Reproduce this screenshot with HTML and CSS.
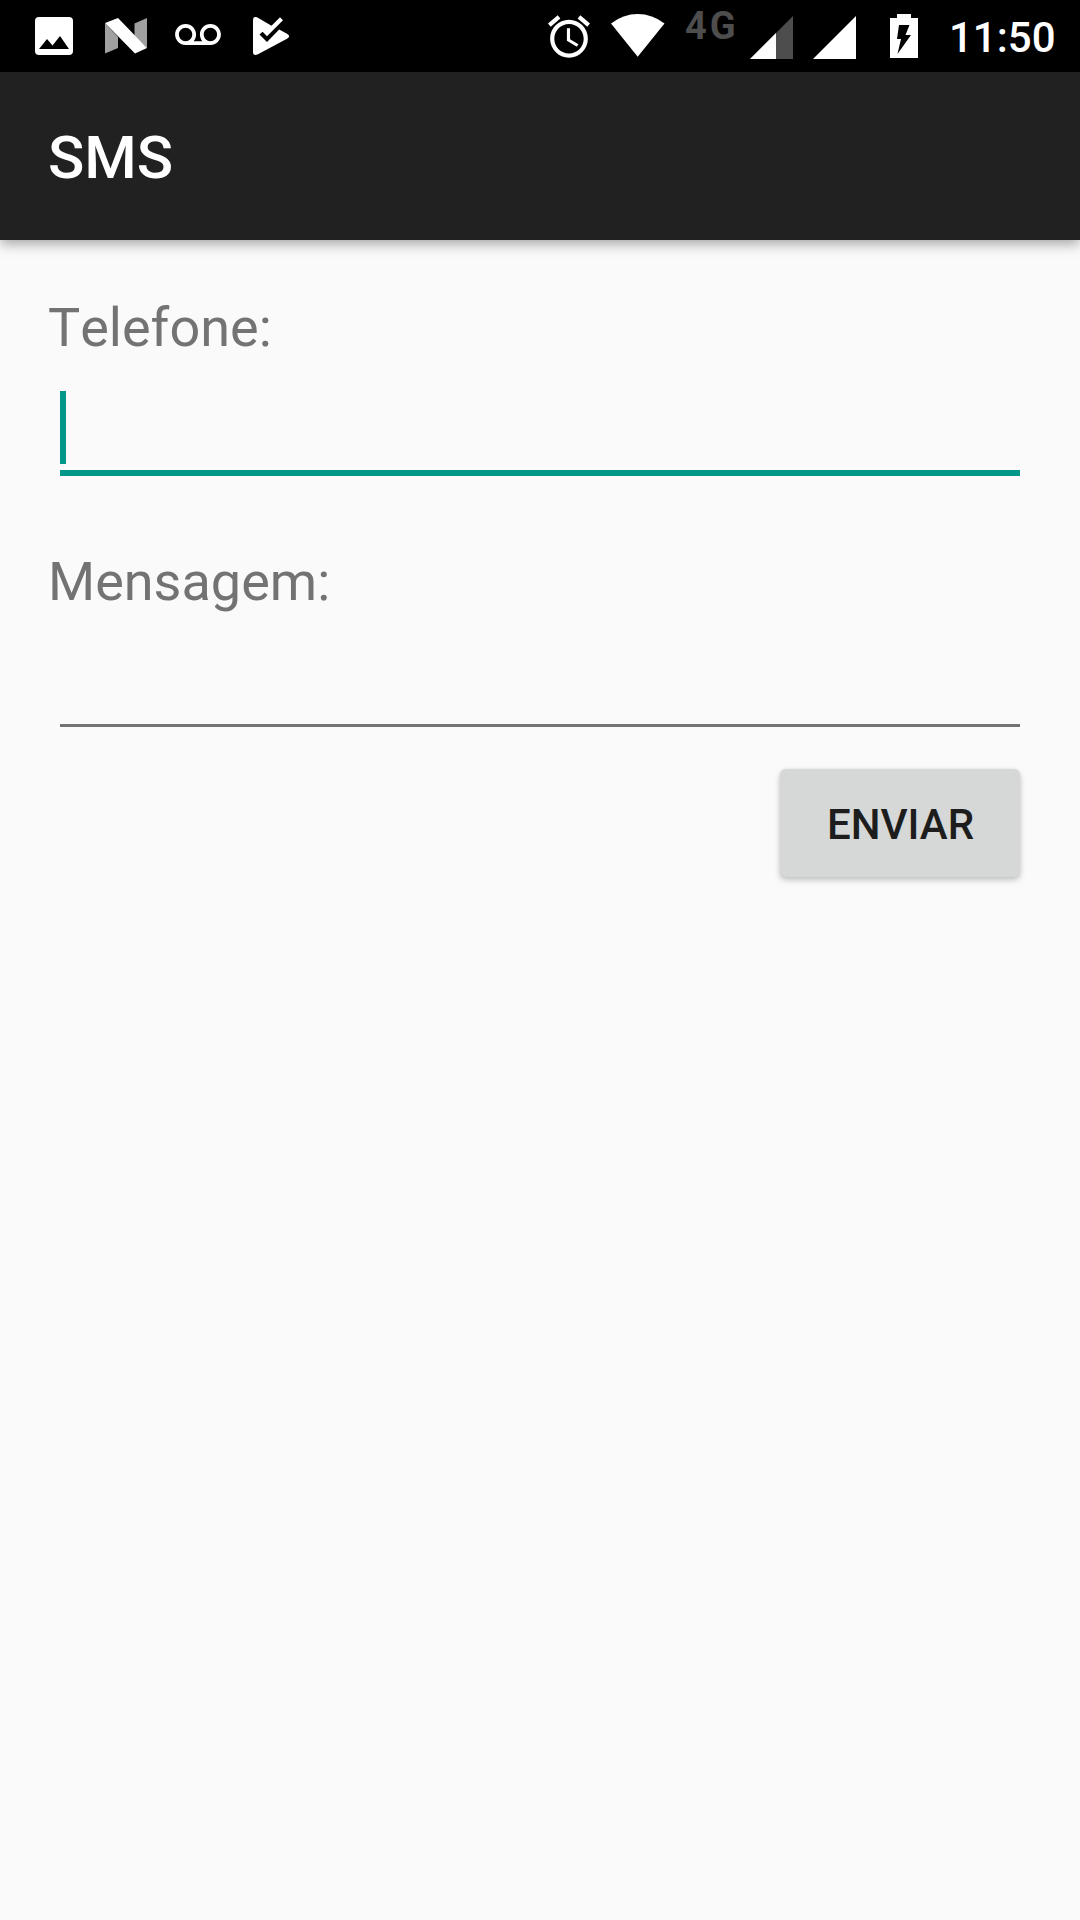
FILE: index.html
```html
<!DOCTYPE html>
<html lang="pt-BR">
<head>
<meta charset="utf-8">
<title>SMS</title>
<link rel="stylesheet" href="styles.css">
</head>
<body>
<div class="status-bar">
  <div class="notifications">
    <svg class="icon-image" width="38" height="38" viewBox="0 0 38 38"><rect width="38" height="38" rx="4" fill="#fff"/><path d="M4 32L12 22l5.500 6.500L25 19l9 13z" fill="#000"/></svg>
    <svg class="icon-n" width="42" height="36" viewBox="0 0 42 36"><path d="M0 5l13 14v11L0 35.500zM29.500 5.500L42 0v30L29.500 18z" fill="#a0a0a0"/><path d="M0 5L13 0l29 30-12 5.500z" fill="#fff"/></svg>
    <svg class="icon-voicemail" width="46" height="21" viewBox="0 6 24 11"><path fill="#fff" d="M18.500 6C15.460 6 13 8.460 13 11.500c0 1.330.470 2.550 1.260 3.500H9.740c.790-.950 1.260-2.170 1.260-3.500C11 8.460 8.540 6 5.500 6S0 8.460 0 11.500 2.460 17 5.500 17h13c3.040 0 5.500-2.460 5.500-5.500S21.540 6 18.500 6zm-13 9C3.570 15 2 13.430 2 11.500S3.570 8 5.500 8 9 9.570 9 11.500 7.430 15 5.500 15zm13 0c-1.930 0-3.500-1.570-3.500-3.500S16.570 8 18.500 8 22 9.570 22 11.500 20.430 15 18.500 15z"/></svg>
    <svg class="icon-play" width="37" height="38" viewBox="0 0 37 38"><path d="M0 3Q0-1 4 .3L18.500 8.700 27 .3l3 2.900L14 19.200l-4.400-4.400L6.500 17.600 14 25 26.200 12.500 34 16.700q4.300 2.500 0 5L4.500 37.600Q0 39 0 35z" fill="#fff"/></svg>
  </div>
  <div class="system">
    <svg class="icon-alarm" width="42" height="43" viewBox="2 1.860 20 20.140"><path fill="#fff" d="M22 5.720l-4.600-3.860-1.290 1.530 4.600 3.860L22 5.720zM7.880 3.390L6.600 1.860 2 5.710l1.290 1.530 4.590-3.850zM12.500 8H11v6l4.750 2.850.750-1.230-4-2.370V8zM12 4c-4.970 0-9 4.030-9 9s4.020 9 9 9c4.970 0 9-4.030 9-9s-4.030-9-9-9zm0 16c-3.870 0-7-3.130-7-7s3.130-7 7-7 7 3.130 7 7-3.130 7-7 7z"/></svg>
    <svg class="icon-wifi" width="54" height="43" viewBox="0 0 54 43"><path d="M0 9.500Q12 0 26.700 0T53.500 9.500L26.700 42.700z" fill="#fff"/></svg>
    <span class="network">4G</span>
    <svg class="icon-signal-low" width="43" height="43" viewBox="0 0 43 43"><path d="M43 0v43H0z" fill="#4d4d4d"/><path d="M26 17v26H0z" fill="#fff"/></svg>
    <svg class="icon-signal" width="43" height="43" viewBox="0 0 43 43"><path d="M43 0v43H0z" fill="#fff"/></svg>
    <svg class="icon-battery" width="28" height="44" viewBox="0 0 28 44"><path d="M7 0h14v4h7v40H0V4h7z" fill="#fff"/><path d="M9 11h10.500l-4 10h5.500L7.500 40 11 25H7z" fill="#000"/></svg>
    <span class="clock">11:50</span>
  </div>
</div>
<header class="app-bar"><h1>SMS</h1></header>
<main class="form">
  <div class="label">Telefone:</div>
  <div class="field focused"><span class="caret"></span></div>
  <div class="label">Mensagem:</div>
  <div class="field"></div>
  <button class="send">ENVIAR</button>
</main>
</body>
</html>
```
FILE: styles.css
```css
* { box-sizing: border-box; }
body {
  margin: 0;
  min-height: 1920px;
  background: #fafafa;
  font-family: Roboto, sans-serif;
  overflow: hidden;
}
svg { display: block; flex: none; }
.status-bar {
  display: flex;
  justify-content: space-between;
  height: 72px;
  background: #000;
  color: #fff;
}
.notifications, .system { display: flex; align-items: flex-start; }
.notifications { padding-left: 35px; }
.icon-image { margin-top: 17px; }
.icon-n { margin: 18px 0 0 32px; }
.icon-voicemail { margin: 24px 0 0 28px; }
.icon-play { margin: 17px 0 0 32px; }
.system { width: 532px; }
.icon-alarm { margin-top: 15px; }
.icon-wifi { margin: 14px 0 0 21px; }
.network {
  width: 64px;
  margin: 4px 0 0 20px;
  color: #4d4d4d;
  font-size: 38px;
  line-height: 45px;
  font-weight: 700;
  letter-spacing: 3px;
}
.icon-signal-low { margin: 16px 0 0 1px; }
.icon-signal { margin: 16px 0 0 20px; }
.icon-battery { margin: 14px 0 0 34px; }
.clock {
  margin: 13px 0 0 31px;
  font-size: 42px;
  line-height: 50px;
  font-weight: 500;
}
.app-bar {
  display: flex;
  align-items: center;
  height: 168px;
  padding: 4px 48px 0;
  background: #212121;
  color: #fff;
  box-shadow: 0 4px 12px rgba(0, 0, 0, .34);
}
.app-bar h1 { margin: 0; font-size: 60px; line-height: 70px; font-weight: 500; }
.form { display: flex; flex-direction: column; padding: 52px 48px 0; }
.label { color: #737373; font-size: 54px; line-height: 72px; font-kerning: none; }
.field { height: 109px; margin: 0 12px; border-bottom: 3px solid #737373; }
.field.focused {
  height: 112px;
  margin-bottom: 70px;
  padding-top: 27px;
  border-bottom: 6px solid #009688;
}
.caret { display: block; width: 6px; height: 73px; background: #009688; }
.send {
  align-self: flex-end;
  width: 240px;
  height: 108px;
  margin: 42px 12px 0 0;
  padding: 4px 0 0 1px;
  border: 0;
  border-radius: 6px;
  background: #d6d8d7;
  color: #1d1d1d;
  font: 500 42px/50px Roboto, sans-serif;
  box-shadow: 0 3px 6px rgba(0, 0, 0, .23), 0 0 2px rgba(0, 0, 0, .08);
}
```
